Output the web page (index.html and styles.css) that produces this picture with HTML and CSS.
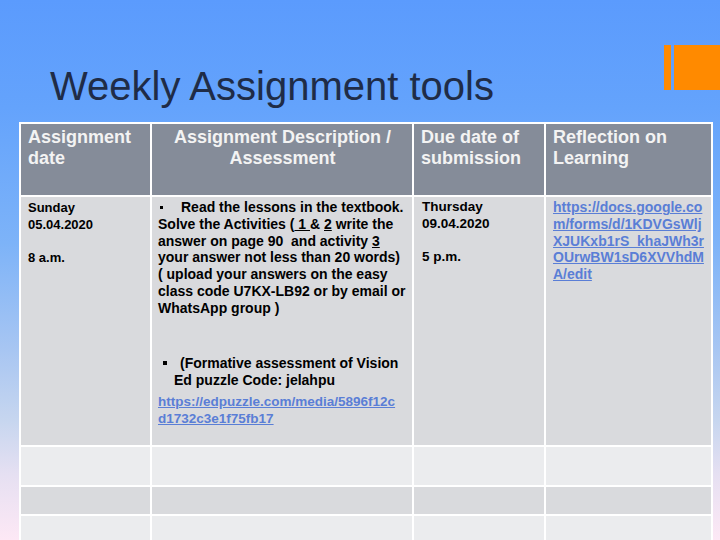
FILE: index.html
```html
<!DOCTYPE html>
<html>
<head>
<meta charset="utf-8">
<link rel="stylesheet" href="styles.css">
</head>
<body>
<div class="slide">
  <header class="top">
    <h1 class="title">Weekly Assignment tools</h1>
    <div class="deco"><span class="bar"></span><span class="block"></span></div>
  </header>
  <table class="grid">
    <colgroup>
      <col class="c1"><col class="c2"><col class="c3"><col class="c4">
    </colgroup>
    <tr class="head">
      <th>Assignment<br>date</th>
      <th class="center">Assignment Description /<br>Assessment</th>
      <th>Due date of<br>submission</th>
      <th>Reflection on<br>Learning</th>
    </tr>
    <tr class="r1">
      <td class="small">Sunday<br>05.04.2020<br><br>8 a.m.</td>
      <td class="desc">
        <p class="p1"><span class="sq"></span>Read the lessons in the textbook.<br>Solve the Activities (<u>&nbsp;1&nbsp;</u>&amp; <u>2</u> write the<br>answer on page 90&nbsp; and activity <u>3</u><br>your answer not less than 20 words)<br>( upload your answers on the easy<br>class code U7KX-LB92 or by email or<br>WhatsApp group )</p>
        <p class="p2"><span class="sq2"></span>(Formative assessment of Vision<br>Ed puzzle Code: jelahpu</p>
        <p class="p3"><a href="#">https://edpuzzle.com/media/5896f12c<br>d1732c3e1f75fb17</a></p>
      </td>
      <td class="mid">Thursday<br>09.04.2020<br><br>5 p.m.</td>
      <td class="link"><a href="#">https://docs.google.co<br>m/forms/d/1KDVGsWlj<br>XJUKxb1rS_khaJWh3r<br>OUrwBW1sD6XVVhdM<br>A/edit</a></td>
    </tr>
    <tr class="r2"><td></td><td></td><td></td><td></td></tr>
    <tr class="r3"><td></td><td></td><td></td><td></td></tr>
    <tr class="r4"><td></td><td></td><td></td><td></td></tr>
  </table>
</div>
</body>
</html>
```

FILE: styles.css
```css
html, body {
  margin: 0;
  padding: 0;
}
body {
  width: 720px;
  height: 540px;
  overflow: hidden;
  font-family: "Liberation Sans", Arial, sans-serif;
}
.slide {
  width: 720px;
  height: 540px;
  overflow: hidden;
  background: linear-gradient(180deg, #5b9bfd 0%, #64a3fc 20%, #7db3f8 45%, #a8c6f2 65%, #c7d6ef 78%, #e6e0f2 88%, #fde8f5 100%);
}
.top {
  display: flex;
  align-items: flex-start;
  height: 122px;
  padding-top: 45px;
  box-sizing: border-box;
}
.title {
  margin: 18px 0 0 50px;
  font-size: 40px;
  line-height: 46px;
  font-weight: normal;
  color: #1f2c47;
  white-space: nowrap;
}
.deco {
  margin-left: auto;
  display: flex;
  height: 45px;
}
.bar {
  width: 7px;
  background: #ff8a00;
  margin-right: 3px;
}
.block {
  width: 46px;
  background: #ff8a00;
}
.grid {
  margin-left: 19px;
  border-collapse: separate;
  border-spacing: 2px;
  background: #ffffff;
  table-layout: fixed;
  width: 694px;
}
.c1 { width: 129px; }
.c2 { width: 260px; }
.c3 { width: 130px; }
.c4 { width: 165px; }
th, td {
  padding: 0;
  vertical-align: top;
  text-align: left;
}
.head th {
  height: 71px;
  box-sizing: border-box;
  background: #858c99;
  color: #f3f3f3;
  font-size: 18px;
  line-height: 21px;
  font-weight: bold;
  padding: 3px 6px 0 7px;
}
.head th.center {
  text-align: center;
}
.r1 td {
  height: 248px;
  box-sizing: border-box;
  background: #d9dadd;
  color: #000;
  font-weight: bold;
  padding: 2px 6px 0 7px;
}
.r1 td.small {
  font-size: 13px;
  line-height: 16.8px;
  padding-top: 3px;
}
.r1 td.mid {
  font-size: 13.5px;
  line-height: 16.8px;
  padding-left: 8px;
}
.r1 td.desc {
  font-size: 14px;
  line-height: 16.8px;
  padding-left: 6px;
  padding-right: 0;
  white-space: nowrap;
}
.r1 td.link {
  font-size: 14px;
  line-height: 16.8px;
  white-space: nowrap;
}
a {
  color: #5a7ed6;
  text-decoration: underline;
}
p {
  margin: 0;
}
.sq {
  display: inline-block;
  width: 3px;
  height: 3px;
  background: #000;
  margin: 0 18px 2px 2px;
  vertical-align: middle;
}
.p2 {
  margin-top: 38px;
  line-height: 17px;
  padding-left: 16px;
  text-indent: -11px;
}
.sq2 {
  display: inline-block;
  width: 4px;
  height: 4px;
  background: #000;
  margin: 0 13px 2px 0;
  vertical-align: middle;
  text-indent: 0;
}
.p3 {
  margin-top: 4px;
  font-size: 13.5px;
  line-height: 17px;
}
.r2 td, .r4 td {
  background: #ebecee;
}
.r3 td {
  background: #d9dadd;
}
.r2 td { height: 38px; }
.r3 td { height: 27px; }
.r4 td { height: 40px; }
```
